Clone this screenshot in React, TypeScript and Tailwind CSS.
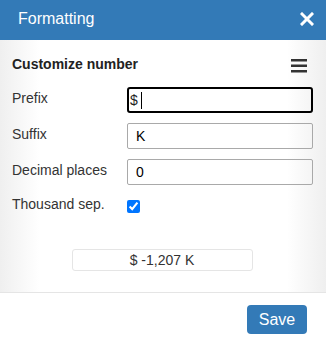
import { useState } from 'react';

const Field = ({ label, value, focused }: { label: string; value: string; focused?: boolean }) => (
  <div className="flex items-center h-[26px]">
    <label className="w-[115px] shrink-0 -mt-[4px]">{label}</label>
    <div
      className={
        focused
          ? "flex-1 h-[26px] border-2 border-black rounded-[3px] flex items-center pl-[1px] text-[#222]"
          : "flex-1 h-[26px] border border-[#a9a9a9] rounded-[2px] flex items-center pl-[8px] text-black"
      }
    >
      <span>{value}</span>
      {focused && <span className="ml-[3px] w-px h-[17px] bg-black" />}
    </div>
  </div>
);

export default function App() {
  const [sep, setSep] = useState(true);

  return (
    <div className="w-[326px] h-[346px] flex flex-col bg-white text-[14px] text-[#333] font-['Liberation_Sans',Arial,sans-serif]">
      <div className="h-[40px] shrink-0 bg-[#337ab7] flex items-center justify-between pl-[18px] pr-[12px] text-white">
        <span className="text-[16px] -mt-[2px]">Formatting</span>
        <svg width="14" height="14" viewBox="0 0 14 14" className="-mt-[2px]">
          <path d="M2 2 L12 12 M12 2 L2 12" stroke="white" strokeWidth="3" strokeLinecap="square" />
        </svg>
      </div>

      <div className="h-[253px] shrink-0 border-b border-[#e5e5e5] bg-[linear-gradient(to_right,#efefef,#ffffff_12%,#ffffff_88%,#efefef)] pl-[12px] pr-[13px] pt-[14px]">
        <div className="flex items-start justify-between">
          <span className="font-bold text-[14px] text-[#222]">Customize number</span>
          <svg width="16" height="14" viewBox="0 0 16 14" className="mt-[5px] mr-[6px]">
            <rect x="0" y="0" width="16" height="2.5" fill="#333" />
            <rect x="0" y="5.5" width="16" height="2.5" fill="#333" />
            <rect x="0" y="11" width="16" height="2.5" fill="#333" />
          </svg>
        </div>

        <div className="mt-[12px] flex flex-col gap-[10px]">
          <Field label="Prefix" value="$" focused />
          <Field label="Suffix" value="K" />
          <Field label="Decimal places" value="0" />
          <div className="flex items-center h-[22px]">
            <label className="w-[115px] shrink-0 -mt-[4px]">Thousand sep.</label>
            <input
              type="checkbox"
              checked={sep}
              onChange={() => setSep(!sep)}
              className="w-[13px] h-[13px] accent-[#0075ff] m-0"
            />
          </div>
        </div>

        <div className="mt-[32px] flex justify-center pr-[1px]">
          <div className="w-[181px] h-[22px] border border-[#e5e5e5] rounded-[3px] bg-white flex items-center justify-center text-[#333]">
            $ -1,207 K
          </div>
        </div>
      </div>

      <div className="flex justify-end pt-[12px] pr-[19px]">
        <button className="w-[60px] h-[29px] bg-[#337ab7] text-white text-[16px] rounded-[4px]">Save</button>
      </div>
    </div>
  );
}
